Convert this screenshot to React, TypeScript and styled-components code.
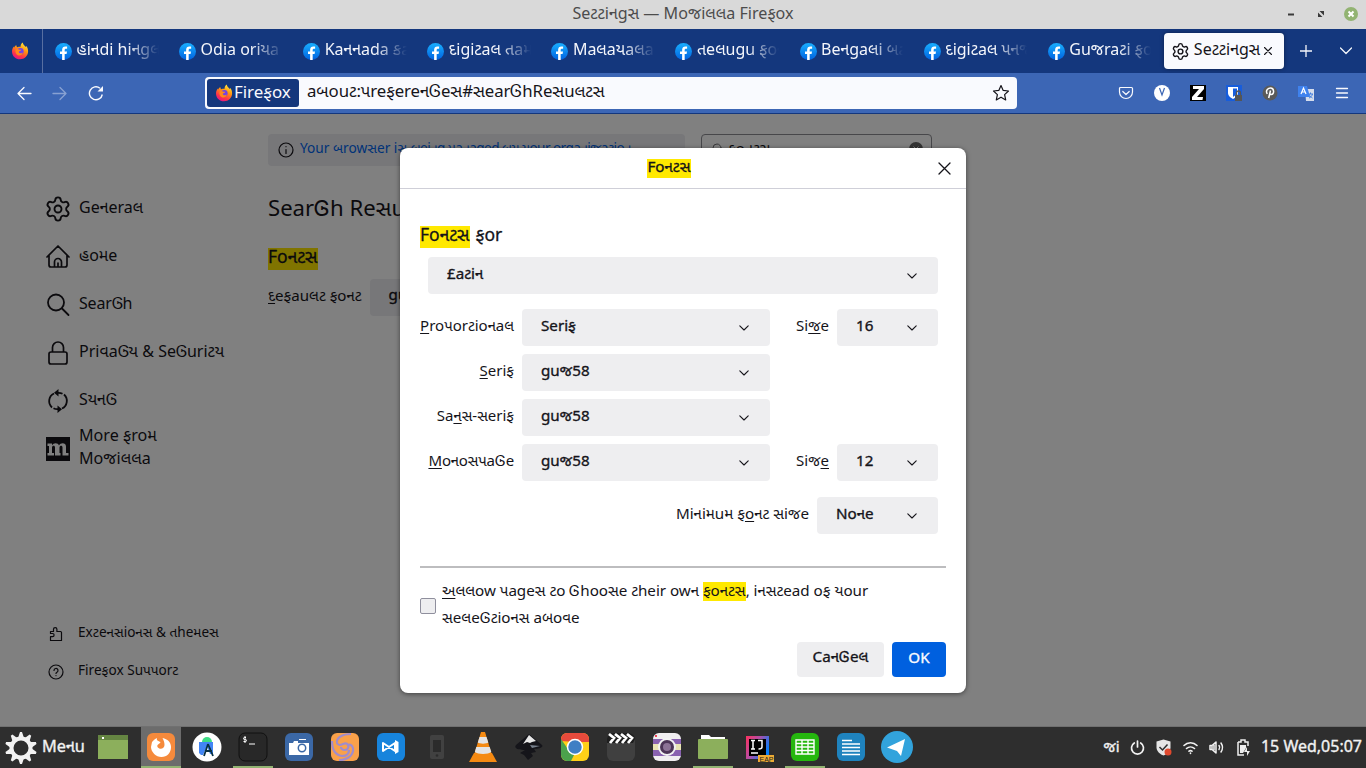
import React from 'react';
import styled, { createGlobalStyle, css } from 'styled-components';
import { Settings } from 'lucide-react';

const Global = createGlobalStyle`
  * { box-sizing: border-box; }
  body { margin: 0; overflow: hidden; font-family: "Noto Sans", "Noto Sans Gujarati", "Lohit Gujarati", sans-serif; }
`;

const Screen = styled.div`
  width: 1366px; height: 768px; display: flex; flex-direction: column; overflow: hidden;
`;
const Text = styled.span<{ $s?: number; $ls?: number; $m?: boolean }>`
  font-size: ${p => p.$s ?? 15.2}px;
  letter-spacing: ${p => p.$ls ?? 0}px;
  white-space: nowrap;
  ${p => p.$m && css`-webkit-text-stroke: 0.35px currentColor;`}
`;

const TitleBar = styled.header`
  height: 29px; flex: none; background: #d9d9d9; color: #4c4c4c;
  display: grid; grid-template-columns: 1fr auto 1fr; align-items: center; line-height: 25px; padding-bottom: 3px;
`;
const WindowButtons = styled.div`
  display: flex; justify-content: flex-end; align-items: center; padding: 2px 8px 0 0;
`;

const TabBar = styled.nav`
  height: 44px; flex: none; background: #14377d; color: #f4f6fb; display: flex; align-items: center;
`;
const PinnedTab = styled.div`
  width: 43px; height: 44px; border-right: 1px solid #586fa1; display: flex; align-items: center; padding: 0 0 1px 11px;
`;
const Tab = styled.div`
  width: 124.1px; height: 44px; flex: none; display: flex; align-items: center; gap: 5px; padding-left: 12px;
  svg { flex: none; margin-top: 0; }
`;
const TabLabel = styled(Text)`
  width: 90px; line-height: 26px; padding-bottom: 4px; margin-left: -.5px;
  mask-image: linear-gradient(to right, #000 50px, transparent 82px);
`;
const ActiveTab = styled.div`
  width: 120px; height: 36px; margin-left: 4px; flex: none; border-radius: 4px; background: #f9fafe; color: #15141a;
  display: flex; align-items: center; padding-left: 7px; gap: 4px; box-shadow: 0 0 4px rgba(0,0,0,.4);
  span { padding-bottom: 3px; }
`;
const TabTools = styled.div`
  display: flex; align-items: center; gap: 28px; padding: 0 0 0 16px;
`;

const NavBar = styled.div`
  height: 41px; flex: none; background: #3c66b5; color: #f9fafe; border-bottom: 1px solid #14377d; display: flex; align-items: center;
`;
const NavButtons = styled.div`
  width: 205px; display: flex; gap: 20px; padding-left: 16px;
`;
const UrlBar = styled.div`
  width: 812px; height: 32px; background: #f9fafe; border-radius: 4px; color: #15141a; display: flex; align-items: center; padding: 0 7px 0 2px;
  & > span { padding-bottom: 3px; }
  & > svg { margin-left: auto; }
`;
const Chip = styled.div`
  width: 92px; height: 28px; border-radius: 3px; background: #15377c; color: #f9fafe; display: flex; align-items: center; gap: 1px; padding-left: 8px; margin-right: 8px; line-height: 22px;
  span { padding-bottom: 3px; }
`;
const Extensions = styled.div`
  display: flex; gap: 20px; align-items: center; padding-left: 101px;
`;

const Content = styled.main`
  position: relative; height: 613px; flex: none; background: #808080; color: #0b0a0d; display: flex; border-bottom: 1px solid #707070;
`;
const Sidebar = styled.aside`
  width: 268px; padding: 70px 0 36px 46px; display: flex; flex-direction: column; justify-content: space-between;
`;
const Category = styled.div`
  height: 48px; display: flex; align-items: center; gap: 9px; line-height: 23px;
  svg { flex: none; margin-top: 2px; }
  span { padding-bottom: 2px; }
`;
const GearSlot = styled.div`
  width: 24px; height: 28px; display: flex; justify-content: center; align-items: center;
`;
const FootLink = styled.div`
  height: 38px; display: flex; align-items: center; gap: 14px; padding-left: 2px;
  svg { margin-top: 2px; }
  span { padding-bottom: 2px; }
`;
const Pane = styled.section`
  width: 664px; padding-top: 20px; display: flex; flex-direction: column; align-items: flex-start;
`;
const TopRow = styled.div`display: flex; gap: 16px;`;
const InfoBar = styled.div`
  width: 417px; height: 32px; border-radius: 4px; background: #777779; color: #003278; display: flex; align-items: center; gap: 6px; padding: 0 0 3px 10px;
  svg { color: #0b0a0d; margin-top: 3px; }
`;
const SearchBox = styled.div`
  width: 231px; height: 32px; border: 1px solid #47474a; border-radius: 4px; display: flex; align-items: center; padding: 0 8px 2px 9px; gap: 5px;
  svg:first-child { color: #3a3a3c; }
  svg:last-child { margin-left: auto; }
`;
const PageTitle = styled.h1`
  margin: 23px 0 0; font-size: 22.1px; font-weight: 400; line-height: 36px; white-space: nowrap;
`;
const Mark = styled.mark<{ $dim?: boolean; $h?: number }>`
  background: ${p => (p.$dim ? '#807400' : '#ffe900')}; color: inherit; display: inline-block;
  height: ${p => p.$h ?? 19}px; line-height: ${p => (p.$h ?? 19) - 3}px;
`;
const SectionTitle = styled.h2`
  margin: 23px 0 0; font-size: 17.5px; font-weight: 400; line-height: 18px; height: 22px; display: flex; -webkit-text-stroke: .3px currentColor;
  mark { line-height: 17px; }
`;
const FontRow = styled.div`
  margin-top: 9px; height: 37px; display: flex; align-items: center; gap: 8px;
  & > span { padding-bottom: 3px; }
`;
const DimSelect = styled.div`
  width: 200px; height: 37px; border-radius: 4px; background: #777779; padding: 4px 19px;
`;

const Dialog = styled.div`
  position: absolute; left: 400px; top: 34px; width: 566px; height: 545px; border-radius: 8px; background: #fff; color: #15141a;
  box-shadow: 0 1px 5px rgba(0,0,0,.5); display: flex; flex-direction: column;
`;
const DialogHeader = styled.div`
  height: 41px; flex: none; border-bottom: 1px solid #cfcfd8; display: flex; align-items: center;
  & > div { flex: 1; display: flex; justify-content: center; }
  & > svg { margin-right: 15px; }
  mark { display: block; line-height: 15px; }
`;
const DialogBody = styled.div`
  padding: 37px 20px 0; display: flex; flex-direction: column;
`;
const Heading = styled.h2`
  margin: 0; font-size: 17.5px; line-height: 17px; height: 21px; font-weight: 400; white-space: nowrap; display: flex; gap: 6px; -webkit-text-stroke: .3px currentColor;
  mark { line-height: 17px; flex: none; }
`;
const Select = styled.div<{ $w: number }>`
  width: ${p => p.$w}px; height: 37px; flex: none; border-radius: 4px; background: #eeeef0; display: flex; align-items: center; justify-content: space-between; padding: 0 21px 0 19px; line-height: 30px;
  & > span { padding-bottom: 5px; }
  & > svg { flex: none; }
`;
const LatinRow = styled.div`padding: 10px 8px 15px;`;
const FieldGrid = styled.div`
  display: grid; grid-template-columns: 94px 248px 51px 101px; column-gap: 8px; row-gap: 8px; align-items: center;
`;
const FieldLabel = styled.label<{ $tight?: boolean }>`
  text-align: right; font-size: 15px; line-height: 26px; padding-bottom: 5px; white-space: nowrap;
  ${p => p.$tight && css`letter-spacing: -.16px;`}
`;
const Key = styled.span`
  text-decoration: underline; text-decoration-thickness: 1px; text-underline-offset: 2px; text-decoration-skip-ink: none;
`;
const MinRow = styled.div`
  display: flex; align-items: center; justify-content: flex-end; gap: 8px; margin: 16px 8px 32px 0;
`;
const Rule = styled.div`height: 2px; background: #bdbdbf;`;
const CheckRow = styled.div`
  display: flex; gap: 6px; margin-top: 9px; height: 55px;
`;
const CheckBox = styled.div`
  width: 16px; height: 16px; margin-top: 21px; border: 1px solid #8f8f9d; border-radius: 2px; background: #eeeef0; flex: none;
`;
const Paragraph = styled.div`line-height: 27px; white-space: nowrap; font-size: 15.2px; letter-spacing: -.03px;`;
const Actions = styled.div`
  display: flex; justify-content: flex-end; gap: 8px; margin-top: 10px;
`;
const Button = styled.button<{ $w: number; $primary?: boolean }>`
  width: ${p => p.$w}px; height: 35px; border: 0; border-radius: 4px; padding: 0 0 6px; font-family: inherit;
  background: ${p => (p.$primary ? '#0060df' : '#eeeef0')}; color: ${p => (p.$primary ? '#fbfbfe' : '#15141a')};
`;

const TaskBar = styled.footer`
  height: 41px; flex: none; background: #2e2e2e; color: #f2f2f2; display: flex; align-items: center;
`;
const MenuButton = styled.div`
  width: 93px; display: flex; align-items: center; gap: 5px; padding-left: 5px; line-height: 28px;
  span { padding-bottom: 4px; }
`;
const Launcher = styled.div<{ $on?: boolean; $bg?: boolean; $gap?: number }>`
  width: 40px; height: 41px; margin-right: ${p => p.$gap ?? 6}px; flex: none; display: flex; align-items: center; justify-content: center;
  background: ${p => (p.$bg ? '#6c6c6c' : 'transparent')};
  border-bottom: 2px solid ${p => (p.$on ? '#92b372' : 'transparent')}; padding-top: 1px;
`;
const Tray = styled.div`
  margin-left: auto; display: flex; align-items: center; padding-right: 4px; gap: 9.4px; line-height: 28px;
  span { padding-bottom: 3px; }
`;

const Firefox = () => (
  <svg width="18" height="18" viewBox="0 0 18 18">
    <defs>
      <linearGradient id="fx" x1=".8" y1="0" x2=".3" y2="1"><stop offset="0" stopColor="#fff044" /><stop offset=".4" stopColor="#ff980e" /><stop offset=".75" stopColor="#ff3647" /><stop offset="1" stopColor="#e31587" /></linearGradient>
    </defs>
    <path d="M9 17.2c-4.6 0-8-3.400-8-7.800 0-2 .8-3.900 1.700-5l.3 1.300C3.700 4.300 4.600 3.500 5.200 3c0 .9.400 1.700 1.200 2.200C7.300 4.700 9 4.800 9.600 4.800 9.500 3 10.300 1.400 11.800.5c.2 2.200 1.800 2.800 3 4.500l.4-.9C16.500 5.500 17.100 7.300 17.100 9.200c0 4.600-3.600 8-8.100 8z" fill="url(#fx)" />
    <circle cx="9.400" cy="9.200" r="3.200" fill="#7542e5" />
    <path d="M4.600 7.600c1.300-1.200 2.900-.6 3.800.2l2-.1c-.5 1.400-1.800 1.300-2.600 2 .2 1.500 2.300 2.300 4 .8-.6 2.600-3 3.600-5 2.700C4.700 12.300 4 10 4.600 7.600z" fill="#ff8a1c" />
  </svg>
);
const Facebook = () => (
  <svg width="17" height="17" viewBox="0 0 16 16">
    <defs><linearGradient id="fb" x2="0" y2="1"><stop stopColor="#19afff" /><stop offset="1" stopColor="#0062e0" /></linearGradient></defs>
    <circle cx="8" cy="8" r="8" fill="url(#fb)" />
    <path d="M6.700 15.900v-5.500h-2V8h2V6.300c0-2 1.200-3.100 3-3.100l1.700.1v2h-1c-1 0-1.300.6-1.300 1.200V8h2.200l-.4 2.400H9.100v5.500z" fill="#fff" />
  </svg>
);
const Stroke = ({ w, h = w, d, sw = 1.5, op = 1 }: { w: number; h?: number; d: string; sw?: number; op?: number }) => (
  <svg width={w} height={h} viewBox={`0 0 ${w} ${h}`} fill="none" stroke="currentColor" strokeWidth={sw} strokeLinecap="round" strokeLinejoin="round" opacity={op}><path d={d} /></svg>
);
const Chevron = () => <Stroke w={10} h={6} d="M.8.8L5 5 9.200.8" sw={1.100} />;

const tabs = ['હiનdi hiનgલ', 'Odia oriયa', 'Kaનનada કa', 'દigiટaલ તaમ', 'Maલaયaલa', 'તeલugu ફoન', 'Beનgaલi બa', 'દigiટaલ પનજ', 'Guજraટi ફo'];

const Squircle = ({ fill, children }: { fill: string; children?: React.ReactNode }) => (
  <svg width="30" height="30" viewBox="0 0 30 30"><rect x="1" y="1" width="28" height="28" rx="6" fill={fill} />{children}</svg>
);

const App = () => (
  <Screen>
    <Global />
    <TitleBar>
      <span />
      <Text $s={16.1}>Seટટiનgસ — Moજiલલa Fireફox</Text>
      <WindowButtons>
        <svg width="7" height="3"><path d="M1 .5h6v2H1z" fill="#3a3a3a" /></svg>
        <svg width="50" height="8"><path d="M25.500 1h4.500v4.500zM24 2.500v4.500h4.500z" fill="#3a3a3a" /></svg>
        <svg width="14" height="14"><circle cx="7" cy="7" r="7" fill="#92b372" /><path d="M4.500 4.500l5 5m0-5l-5 5" stroke="#fff" strokeWidth="2" /></svg>
      </WindowButtons>
    </TitleBar>
    <TabBar>
      <PinnedTab><Firefox /></PinnedTab>
      {tabs.map(t => <Tab key={t}><Facebook /><TabLabel $s={16}>{t}</TabLabel></Tab>)}
      <ActiveTab>
        <Settings size={19} strokeWidth={1.8} />
        <Text $s={16}>Seટટiનgસ</Text>
        <Stroke w={8} d="M.5.5l7 7m0-7l-7 7" sw={1.100} />
      </ActiveTab>
      <TabTools>
        <Stroke w={12} d="M6 0v12M0 6h12" sw={1.300} />
        <Stroke w={12} h={8} d="M.5 1L6 6.500 11.500 1" sw={1.300} />
      </TabTools>
    </TabBar>
    <NavBar>
      <NavButtons>
        <Stroke w={16} d="M15 8.500H2m6-6l-6 6 6 6" sw={1.300} />
        <Stroke w={16} d="M1 8.500h13m-6-6l6 6-6 6" sw={1.300} op={0.4} />
        <svg width="16" height="16" viewBox="0 0 16 16"><path d="M14.300 9.500A6.500 6.500 0 1 1 12 3.200" fill="none" stroke="currentColor" strokeWidth="1.400" /><path d="M15 1v5.500H9.500z" fill="currentColor" /></svg>
      </NavButtons>
      <UrlBar>
        <Chip><Firefox /><Text $s={16.9}>Fireફox</Text></Chip>
        <Text $s={16.8} $ls={-0.08}>aબouટ:પreફereનᎶeસ#સearᎶhReસuલટસ</Text>
        <svg width="18" height="18" viewBox="0 0 18 18"><path d="M9 1.500l2.200 4.900 5.300.6-3.900 3.600 1.100 5.300L9 13.200l-4.700 2.700 1.100-5.300L1.500 7l5.300-.6z" fill="none" stroke="#15141a" strokeWidth="1.200" strokeLinejoin="round" /></svg>
      </UrlBar>
      <Extensions>
        <Stroke w={16} d="M2.500 2.500h11a1 1 0 0 1 1 1V7a6.500 6.500 0 0 1-13 0V3.500a1 1 0 0 1 1-1zM4.800 6.500L8 9.500l3.200-3" sw={1.200} />
        <svg width="16" height="16"><circle cx="8" cy="8" r="8" fill="#fff" /><path d="M5.500 3L8 10l2.500-7" fill="none" stroke="#3c66b5" strokeWidth="1.200" /></svg>
        <svg width="16" height="16"><path d="M0 0h16v16H0z" /><path d="M3 1h11v3L7 12h6l-.5 3H2v-3l7-8H3z" fill="#fff" /></svg>
        <svg width="16" height="16" viewBox="0 0 16 16"><path d="M0 0h16v16H0z" fill="#175ddc" /><path d="M2 2h10v6c0 3-3 5-5 6-2-1-5-3-5-6z" fill="#fff" /><path d="M7 3.500h4V9l-4 3z" fill="#175ddc" /><rect x="9" y="10" width="7" height="6" fill="#555" /><path d="M10.500 10V8a2 2 0 0 1 4 0v2" fill="none" stroke="#555" strokeWidth="1.300" /></svg>
        <svg width="16" height="16"><circle cx="8" cy="8" r="7.500" fill="#5a5a5a" /><path d="M5.200 9C3 5 6.500 3 8.500 3c4 0 4 6.500.7 6.500-.8 0-1.300-.4-1.500-.9M8.500 5.500L6.700 13" fill="none" stroke="#fff" strokeWidth="1.500" /></svg>
        <svg width="16" height="16"><path d="M7 4h9v12H8z" fill="#d5ddec" /><path d="M10 9h5m-2.500-1.500V9m2 0c-.5 2-2 3.500-3.500 4m0-4c.5 2 2 3 3.500 4" stroke="#3f7de0" fill="none" /><path d="M0 1h9l3 11H0z" fill="#3f82ee" /><path d="M3 9l2.500-6L8 9M4 7h3" stroke="#fff" fill="none" strokeWidth="1.200" /></svg>
        <Stroke w={16} h={12} d="M2.500 1.500h11M2.500 6h11M2.500 10.500h11" sw={1.300} />
      </Extensions>
    </NavBar>
    <Content>
      <Sidebar>
        <div>
          <Category><GearSlot><Settings size={28} strokeWidth={1.6} /></GearSlot><Text $s={16}>Geનeraલ</Text></Category>
          <Category><Stroke w={24} d="M1 12L12 1l11 11M3 10.500V20a2 2 0 0 0 2 2h14a2 2 0 0 0 2-2v-9.500M8.500 21.500V17a3.500 3.500 0 0 1 7 0v4.500M12 18v3.500" sw={1.700} /><Text $s={16}>હoમe</Text></Category>
          <Category><Stroke w={24} d="M18 9.500a8 8 0 1 1-16 0 8 8 0 0 1 16 0zM16 15.500l6.500 6.500" sw={1.800} /><Text $s={16} $ls={-0.2}>SearᎶh</Text></Category>
          <Category><Stroke w={24} d="M5 11h14a2 2 0 0 1 2 2v8a2 2 0 0 1-2 2H5a2 2 0 0 1-2-2v-8a2 2 0 0 1 2-2zM6.500 11V6.500a5.500 5.500 0 0 1 11 0V11" sw={1.700} /><Text $s={16}>PriવaᎶય &amp; SeᎶuriટય</Text></Category>
          <Category><svg width="24" height="24" viewBox="0 0 24 24"><path d="M8 4.500A8.500 8.500 0 0 0 6 18.500M16 19.500A8.500 8.500 0 0 0 18 5.500M10 3.800h2.500a8 8 0 0 1 4 1M14 20.200h-2.500a8 8 0 0 1-4-1" fill="none" stroke="currentColor" strokeWidth="1.800" /><path d="M12.500 0v7.500L8 3.800zM11.500 24v-7.500l4.500 3.700z" fill="currentColor" /></svg><Text $s={16} $ls={-0.1}>SયનᎶ</Text></Category>
          <Category><svg width="24" height="24" viewBox="0 0 24 24"><path d="M0 0h24v24H0z" fill="currentColor" /><path d="M1.500 6.500h4.500v2c1.500-3 6-3 7 0 1.500-3 7-3 7 1v6.500h2.500v2.500h-6v-8c0-2.500-3-2-3 0v5.500h1v2.500H9v-8c0-2.500-3-2-3 0v5.500h2v2.500H1.500V16H3V9H1.500z" fill="#808080" /></svg><Text $s={16.1}>More ફroમ<br />Moજiલલa</Text></Category>
        </div>
        <div>
          <FootLink><Stroke w={16} d="M2.500 5.500h3V3.300a1.700 1.700 0 0 1 3.400 0v2.200h3.600a1 1 0 0 1 1 1v8h-11v-3.800h2a1.600 1.600 0 0 0 0-3.200h-2z" sw={1.200} /><Text $s={13.6}>Exટeનસioનસ &amp; તheમeસ</Text></FootLink>
          <FootLink><Stroke w={16} d="M15 8A7 7 0 1 1 1 8a7 7 0 0 1 14 0zM6 6.500a2 2 0 1 1 3 1.700c-.7.400-1 .8-1 1.300M8 11.500v.1" sw={1.200} /><Text $s={13.6}>Fireફox Suપપorટ</Text></FootLink>
        </div>
      </Sidebar>
      <Pane>
        <TopRow>
          <InfoBar><Stroke w={16} d="M15 8A7 7 0 1 1 1 8a7 7 0 0 1 14 0zM8 7.500v4M8 4.600v.1" sw={1.200} /><Text $s={13.7}>Your બrowસer iસ <Text $s={13.6} $ls={-0.56}>બeiનg મaનaged બય યour orgaનiજaટioન.</Text></Text></InfoBar>
          <SearchBox><Stroke w={12} d="M10 5a4 4 0 1 1-8 0 4 4 0 0 1 8 0zM8 8l3 3" sw={1} /><Text $s={15}>ફoનટસ</Text><svg width="14" height="14"><circle cx="7" cy="7" r="7" fill="#333" /><path d="M4.500 4.500l5 5m0-5l-5 5" stroke="#808080" /></svg></SearchBox>
        </TopRow>
        <PageTitle>SearᎶh Reસuલટસ</PageTitle>
        <SectionTitle><Mark $dim $h={22}>Foનટસ</Mark></SectionTitle>
        <FontRow><Text $s={15.1}><Key>દ</Key>eફauલટ ફoનટ</Text><DimSelect><Text $m>guજ58</Text></DimSelect></FontRow>
      </Pane>
      <Dialog>
        <DialogHeader>
          <div><Text $m><Mark>Foનટસ</Mark></Text></div>
          <Stroke w={13} d="M1 1l11 11M12 1L1 12" sw={1.300} />
        </DialogHeader>
        <DialogBody>
          <Heading><Mark $h={22}>Foનટસ</Mark><span>ફor</span></Heading>
          <LatinRow><Select $w={510}><Text $m>£aટiન</Text><Chevron /></Select></LatinRow>
          <FieldGrid>
            <FieldLabel><Key>P</Key>roપorટioનaલ</FieldLabel><Select $w={248}><Text $m>Seriફ</Text><Chevron /></Select>
            <FieldLabel>Si<Key>જ</Key>e</FieldLabel><Select $w={101}><Text $m>16</Text><Chevron /></Select>
            <FieldLabel><Key>S</Key>eriફ</FieldLabel><Select $w={248}><Text $m>guજ58</Text><Chevron /></Select><span /><span />
            <FieldLabel>Sa<Key>ન</Key>સ-સeriફ</FieldLabel><Select $w={248}><Text $m>guજ58</Text><Chevron /></Select><span /><span />
            <FieldLabel $tight><Key>M</Key>oનoસપaᎶe</FieldLabel><Select $w={248}><Text $m>guજ58</Text><Chevron /></Select>
            <FieldLabel>Siજ<Key>e</Key></FieldLabel><Select $w={101}><Text $m>12</Text><Chevron /></Select>
          </FieldGrid>
          <MinRow><FieldLabel><Text>Miનiમuમ ફ<Key>o</Key>નટ સiજe</Text></FieldLabel><Select $w={121}><Text $m>Noનe</Text><Chevron /></Select></MinRow>
          <Rule />
          <CheckRow><CheckBox /><Paragraph><Key>અ</Key>લલow પageસ ટo Ꮆhooસe ટheir owન <Mark>ફoનટસ</Mark>, iનસટead oફ યour<br />સeલeᎶટioનસ aબoવe</Paragraph></CheckRow>
          <Actions><Button $w={87}><Text $m>CaનᎶeલ</Text></Button><Button $w={54} $primary><Text $m>OK</Text></Button></Actions>
        </DialogBody>
      </Dialog>
    </Content>
    <TaskBar>
      <MenuButton>
        <svg width="32" height="32" viewBox="-16 -16 32 32"><circle r="9.500" fill="none" stroke="#f2f2f2" strokeWidth="4" />{[0, 36, 72, 108, 144, 180, 216, 252, 288, 324].map(a => <path key={a} d="M-3-10L-1-16h2L3-10z" fill="#f2f2f2" transform={`rotate(${a})`} />)}</svg>
        <Text $m $s={16.3}>Meનu</Text>
      </MenuButton>
      <Launcher $gap={8}><svg width="30" height="24"><path d="M0 0h30v24H0z" fill="#8caf5c" /><path d="M0 0h30v5H0z" fill="#658542" /><path d="M4 2h2v2H4z" fill="#fff" /></svg></Launcher>
      <Launcher $bg $on><Squircle fill="#f58a3c"><path d="M6 10c1.500-1 2-3 5-4-1 3 2 3 3.500 4-.5 2-4 2-3 5 2 3 7 2 7-2 0-3-1-5-2-7 5 1 8.500 4 8.500 9 0 6-4 10-9.500 10S5 20 5 15z" fill="#fff" /></Squircle></Launcher>
      <Launcher><svg width="30" height="30"><circle cx="15" cy="15" r="14.500" fill="#fff" /><path d="M10 10a5 5 0 0 1 10 0z" fill="#3ddc84" /><path d="M7 10h14v12h-3l-3-8-4 9H9l-2-2z" fill="#4285f4" /><path d="M16 12l-4 12M16 12l5 12M13 19h7" stroke="#073042" strokeWidth="1.800" /></svg></Launcher>
      <Launcher $on><Squircle fill="#282828"><rect x="1" y="1" width="28" height="28" rx="6" fill="none" stroke="#101010" /><path d="M8 5.500H6.500a1 1 0 0 0 0 2H7.500a1 1 0 0 1 0 2H5.500M7 4v7M11 12h6" stroke="#fff" fill="none" /></Squircle></Launcher>
      <Launcher><Squircle fill="#3b68a6"><path d="M5 11h4l1-2h4v2h11v12H5z" fill="#fff" /><path d="M15 7h7v1h-7z" fill="#fff" /><circle cx="18" cy="16" r="3.700" fill="#fff" stroke="#3b68a6" strokeWidth="1.500" /></Squircle></Launcher>
      <Launcher><Squircle fill="#f9a14a"><path d="M21 2c-9 0-15 4-14 9 1 3 4 2 6 1s4-1 5 1 0 5-3 5-4-2-4-3M9 28c9 0 15-5 14-12-1-3-3-4-5-3M2 9c0 8 3 14 10 15 4 0 7-2 7-6" fill="none" stroke="#a08ccc" strokeWidth="2.200" /></Squircle></Launcher>
      <Launcher><Squircle fill="#1784dc"><path d="M7 11l12 8V11L7 19z" fill="none" stroke="#fff" strokeWidth="2" strokeLinejoin="round" /><path d="M19 8l3.500 2v10L19 22z" fill="#fff" /></Squircle></Launcher>
      <Launcher><svg width="14" height="24"><rect width="14" height="24" rx="2" fill="#414141" /><path d="M3 5h8v12H3z" fill="#2b2b2b" /><circle cx="7" cy="20.500" r="1.300" fill="#2b2b2b" /></svg></Launcher>
      <Launcher><svg width="28" height="32" viewBox="0 0 28 32"><path d="M5 22h18l5 9H0z" fill="#f58a12" /><path d="M12 1h4l7 23c-2 3-16 3-18 0z" fill="#f58a12" /><path d="M10.500 6h7l1.800 5.500c-2 1.500-8.500 1.500-10.500 0zM7.300 16h13.400l1.600 5c-3 2.500-13.500 2.500-16.500 0z" fill="#e4e4e4" /></svg></Launcher>
      <Launcher><svg width="30" height="30"><path d="M15 2l13 11c2 3-4 4-8 4l2 3-5 1 2 3-5 4-4-5-4-2 5-3c-5 0-12-1-9-5z" fill="#15151a" /><path d="M15 3l7 6-4 1-2 1-3-1-4 2z" fill="#e8e8e8" /><path d="M16 13l10 1-8 2z" fill="#77808c" /></svg></Launcher>
      <Launcher><Squircle fill="#ffd017"><path d="M1 9V7a6 6 0 0 1 6-6h16a6 6 0 0 1 6 6v3H15z" fill="#e64a3c" /><path d="M1 7l9 13 6-1-5 10H7a6 6 0 0 1-6-6z" fill="#4ba24c" /><circle cx="15" cy="15" r="7.500" fill="#3f7fc4" stroke="#fff" strokeWidth="1.500" /></Squircle></Launcher>
      <Launcher><Squircle fill="#404040"><path d="M1 7a6 6 0 0 1 6-6h16a6 6 0 0 1 6 6l-2 4H1z" fill="#1e1e1e" /><path d="M3 2l5 4-4 5m5-9l5 4-4 5m5-9l5 4-4 5m5-9l5 4-4 5" stroke="#fff" fill="none" strokeWidth="2.800" /></Squircle></Launcher>
      <Launcher><Squircle fill="#f0eef0"><path d="M1 7h28v17H1z" fill="#8962b0" /><path d="M1 12h28v6H1z" fill="#e9e4b4" /><circle cx="15" cy="15" r="9" fill="#f2f2f2" /><circle cx="15" cy="15" r="7" fill="#4c3557" /><circle cx="15" cy="15" r="4" fill="#8c7396" /><path d="M3 3h2v2H3z" fill="#e45" /></Squircle></Launcher>
      <Launcher $on><svg width="30" height="26"><path d="M3 4V1h8l2 2h14v4H3z" fill="#fff" /><rect y="5" width="30" height="20" rx="1" fill="#8caf5c" /></svg></Launcher>
      <Launcher><svg width="30" height="30"><defs><linearGradient id="ij" x2="1" y2=".5"><stop stopColor="#fe315d" /><stop offset=".5" stopColor="#b14ea8" /><stop offset="1" stopColor="#087cfa" /></linearGradient></defs><path d="M2 4h23v23H2z" fill="url(#ij)" /><path d="M5 7h17v17H5z" fill="#000" /><path d="M7 8.500h4M9 8.500V17M7 17h4M14 8.500h4V15q0 2-3.500 2M7 21h7" stroke="#fff" fill="none" strokeWidth="1.500" /><path d="M14 23h16v8H14z" fill="#eeab35" /><text x="15.500" y="29.500" fontSize="7" fontFamily="Liberation Sans" fill="#222">EAP</text></svg></Launcher>
      <Launcher $on><Squircle fill="#25b70e"><path d="M6 8h18v14H6zM6 11.500h18M6 15h18M6 18.500h18M12 8v14M18 8v14" fill="none" stroke="#fff" strokeWidth="1.400" /></Squircle></Launcher>
      <Launcher><Squircle fill="#1f83be"><path d="M6 8.500h10M6 12h18M6 15.500h18M6 19h18M6 22.500h18" stroke="#fff" strokeWidth="1.700" /></Squircle></Launcher>
      <Launcher><svg width="32" height="32"><circle cx="16" cy="16" r="16" fill="#32a3dc" /><path d="M6 16.500L24 8l-4 17-4-5z" fill="#fff" /></svg></Launcher>
      <Tray>
        <Text $m $s={15}>જi</Text>
        <Stroke w={17} d="M5.300 4a6 6 0 1 0 6.400 0M8.500 2V8" sw={1.700} />
        <svg width="17" height="17"><path d="M8.500.5l7 2v6c0 4-4 7-7 8-3-1-7-4-7-8v-6z" fill="#e6e6e6" /><path d="M4.500 8l3 3 5-5.500" fill="none" stroke="#2e2e2e" strokeWidth="1.500" /><circle cx="13" cy="13" r="3.500" fill="#e0492e" /></svg>
        <Stroke w={17} d="M2 6.500a9 9 0 0 1 13 0M4.500 9.500a6 6 0 0 1 8 0M7 12.200a2.500 2.500 0 0 1 3 0M8.500 14v.5" sw={1.600} />
        <Stroke w={17} d="M2 6.500h2L8 3v11l-4-3.500H2zM4 7v3M6 6v5M11 6.500q1.500 2 0 4M13 4q3 4.500 0 9" sw={1.500} />
        <svg width="17" height="17"><path d="M3 3h3V1h4v2h3v4M3 3v13h6" fill="none" stroke="#eee" strokeWidth="1.500" /><path d="M5 6h6v3L8 14H5z" fill="#eee" /><path d="M12 8l-3 5h3v4l3-5h-3z" fill="#eee" /></svg>
        <Text $m $s={16}>15 Wed,05:07</Text>
      </Tray>
    </TaskBar>
  </Screen>
);

export default App;
